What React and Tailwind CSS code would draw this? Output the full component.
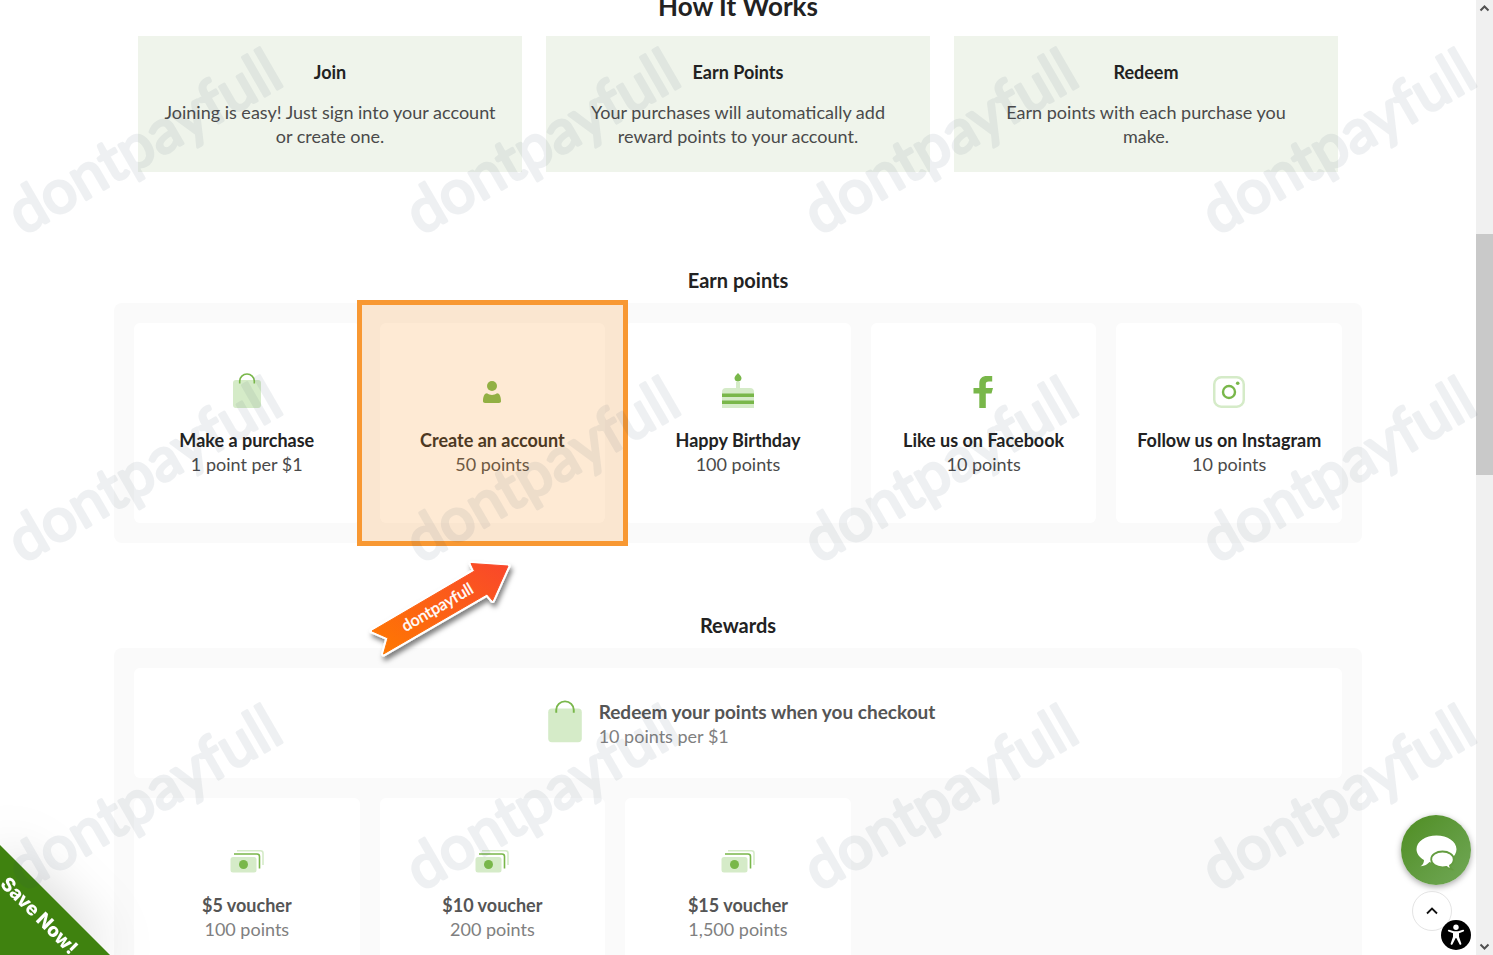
import React from 'react';

const steps = [
  { title: 'Join', text: 'Joining is easy! Just sign into your account or create one.' },
  { title: 'Earn Points', text: 'Your purchases will automatically add reward points to your account.' },
  { title: 'Redeem', text: 'Earn points with each purchase you\nmake.' },
];

const Bag = ({ size }) => (
  <svg width={size} height={size} viewBox="0 0 40 40" fill="none">
    <rect x="6" y="8" width="28" height="28" rx="3" fill="#d5ebc8" />
    <path d="M12.7 11.5V9a7.3 7 0 0 1 14.6 0v2.5" stroke="#79b74a" strokeWidth="1.6" />
  </svg>
);

const User = () => (
  <svg width="40" height="40" viewBox="0 0 40 40" fill="#79b74a">
    <circle cx="20" cy="14" r="5" />
    <path d="M15 21.3c3 2.2 7 2.2 10 0 2.6 0 4 3.400 4 8 0 1.100-.9 1.700-2 1.700H13c-1.100 0-2-.6-2-1.700 0-4.600 1.400-8 4-8z" />
  </svg>
);

const Cake = () => (
  <svg width="40" height="40" viewBox="0 0 40 40">
    <path d="M4 36V20a4 4 0 0 1 4-4h10v-6h4v6h10a4 4 0 0 1 4 4v16z" fill="#d5ebc8" />
    <path d="M4 21.500h32v3.500H4zM4 28.500h32v3.500H4z" fill="#79b74a" />
    <path d="M20 1c2 2.200 3.500 3.600 3.500 5.200 0 2-1.600 3.300-3.500 3.300s-3.500-1.300-3.500-3.300C16.500 4.600 18 3.200 20 1z" fill="#79b74a" />
  </svg>
);

const Facebook = () => (
  <svg width="40" height="40" viewBox="0 0 40 40" fill="#79b74a">
    <path d="M15.300 36V21.500H9.500v-5.500h5.800v-4.500C15.300 6.500 18 4 23 4h5.200v5.500H24.800c-2.300 0-3 .9-3 2.700V16h7.200L27.500 21.500h-5.700V36z" />
  </svg>
);

const Instagram = () => (
  <svg width="40" height="40" viewBox="0 0 40 40" fill="none">
    <rect x="5.250" y="5.250" width="29.500" height="29.500" rx="7" stroke="#d5ebc8" strokeWidth="2.500" />
    <circle cx="20" cy="20" r="6" stroke="#79b74a" strokeWidth="2.400" />
    <circle cx="28.700" cy="11.300" r="1.800" fill="#79b74a" />
  </svg>
);

const Cash = () => (
  <svg width="40" height="40" viewBox="0 0 40 40" fill="none">
    <path d="M10 9.700h23.500a2.500 2.500 0 0 1 2.500 2.500V24" stroke="#d5ebc8" strokeWidth="1.600" />
    <path d="M7 13h23a2.500 2.500 0 0 1 2.500 2.500V27.500" stroke="#79b74a" strokeWidth="1.600" />
    <rect x="3.500" y="16" width="26" height="15.500" rx="2.500" fill="#d5ebc8" />
    <circle cx="16.500" cy="23.500" r="4.500" fill="#79b74a" />
  </svg>
);

const earn = [
  { icon: <Bag size={40} />, title: 'Make a purchase', points: '1 point per $1' },
  { icon: <User />, title: 'Create an account', points: '50 points', highlight: true },
  { icon: <Cake />, title: 'Happy Birthday', points: '100 points' },
  { icon: <Facebook />, title: 'Like us on Facebook', points: '10 points' },
  { icon: <Instagram />, title: 'Follow us on Instagram', points: '10 points' },
];

const vouchers = [
  { title: '$5 voucher', points: '100 points' },
  { title: '$10 voucher', points: '200 points' },
  { title: '$15 voucher', points: '1,500 points' },
];

const Arrow = () => (
  <svg className="absolute -left-5 top-[227px] z-20" width="170" height="120" viewBox="0 0 170 120">
    <defs>
      <linearGradient id="arrowFill" x1="0" y1="1" x2="1" y2="0">
        <stop offset="0" stopColor="#ff7a00" />
        <stop offset="1" stopColor="#f9472b" />
      </linearGradient>
      <filter id="arrowShadow" x="-20%" y="-20%" width="140%" height="140%">
        <feDropShadow dx="2" dy="4" stdDeviation="2.500" floodOpacity="0.5" />
      </filter>
    </defs>
    <path
      d="M111 13.500l37 2.500-15.500 34.500-5.500-6.500-103.500 60 4.500-16L12 81l102.500-60z"
      fill="#fff"
      stroke="#fff"
      strokeWidth="5"
      strokeLinejoin="round"
      filter="url(#arrowShadow)"
    />
    <path
      d="M111 13.500l37 2.500-15.500 34.500-5.500-6.500-103.500 60 4.500-16L12 81l102.500-60z"
      fill="url(#arrowFill)"
      stroke="url(#arrowFill)"
      strokeWidth="1"
      strokeLinejoin="round"
    />
    <text
      transform="translate(80 62) rotate(-30)"
      textAnchor="middle"
      fill="#fff"
      stroke="#fff"
      strokeWidth="0.400"
      strokeLinejoin="round"
      className="font-[Lato,sans-serif] text-[16px]"
    >
      dontpayfull
    </text>
  </svg>
);

const marks = [0, 328, 656].flatMap((y) => [0, 398, 796, 1194].map((x) => ({ x, y })));

const Watermarks = () => (
  <svg className="pointer-events-none absolute inset-0 z-40 h-full w-full opacity-[0.075]" aria-hidden="true">
    {marks.map(({ x, y }) => (
      <text
        key={`${x}-${y}`}
        transform={`translate(${x + 23} ${y + 236}) rotate(-30)`}
        fill="#304860"
        stroke="#304860"
        strokeWidth="3"
        strokeLinejoin="round"
        className="font-[Lato,sans-serif] text-[61px]"
      >
        dontpayfull
      </text>
    ))}
  </svg>
);

const Scrollbar = () => (
  <div className="flex w-[17px] shrink-0 flex-col bg-[#f0f0f0]">
    <svg width="17" height="17" viewBox="0 0 17 17" fill="none" stroke="#505050" strokeWidth="2">
      <path d="M4.500 10.500l4-4 4 4" />
    </svg>
    <div className="flex-1">
      <div className="mt-[217px] h-[241px] bg-[#c9c9c9]"></div>
    </div>
    <svg width="17" height="17" viewBox="0 0 17 17" fill="none" stroke="#505050" strokeWidth="2">
      <path d="M4.500 6.500l4 4 4-4" />
    </svg>
  </div>
);

const App = () => {
  return (
    <div className="relative flex h-screen overflow-hidden bg-white font-[Lato,sans-serif] text-[18px] leading-6 text-[#222]">
      <main className="min-w-0 flex-1">
        <div className="mx-auto max-w-[1248px] text-center">

          {/* HOW IT WORKS */}
          <section className="px-6">
            <h1 className="-mt-[10px] mb-[14px] text-[26px] font-bold leading-8">How It Works</h1>
            <div className="grid grid-cols-3 gap-6">
              {steps.map((s) => (
                <div key={s.title} className="bg-[#eff4eb] p-6">
                  <h3 className="mb-4 font-bold">{s.title}</h3>
                  <p className="whitespace-pre-line text-[#4a4a4a]">{s.text}</p>
                </div>
              ))}
            </div>
          </section>

          {/* EARN */}
          <section className="mt-[95px]">
            <h2 className="mb-[10px] text-[20px] font-bold leading-[26px]">Earn points</h2>
            <div className="grid grid-cols-5 gap-5 rounded-lg bg-[#fafafa] p-5">
              {earn.map((e) => (
                <div key={e.title} className="relative h-[200px] rounded-md bg-white pt-[49px]">
                  <div className="mb-4 flex h-10 justify-center">{e.icon}</div>
                  <h3 className="font-bold">{e.title}</h3>
                  <p className="text-[#4a4a4a]">{e.points}</p>
                  {e.highlight && (
                    <>
                      <div className="absolute -inset-[23px] z-10 border-[5px] border-[#f89832] bg-[#f89428]/20"></div>
                      <Arrow />
                    </>
                  )}
                </div>
              ))}
            </div>
          </section>

          {/* REWARDS */}
          <section className="mt-[69px]">
            <h2 className="mb-[10px] text-[20px] font-bold leading-[26px]">Rewards</h2>
            <div className="rounded-lg bg-[#fafafa] p-5">
              <div className="mb-5 flex h-[110px] items-center justify-center gap-[10px] rounded-md bg-white">
                <Bag size={48} />
                <div className="pt-0.5 text-left leading-[25px]">
                  <h3 className="text-[19px] font-bold text-[#555]">Redeem your points when you checkout</h3>
                  <p className="text-[#808080]">10 points per $1</p>
                </div>
              </div>
              <div className="grid grid-cols-5 gap-5">
                {vouchers.map((v) => (
                  <div key={v.title} className="h-[200px] rounded-md bg-white pt-[43px]">
                    <div className="mb-3 flex h-10 justify-center"><Cash /></div>
                    <h3 className="font-bold text-[#555]">{v.title}</h3>
                    <p className="text-[#808080]">{v.points}</p>
                  </div>
                ))}
              </div>
            </div>
          </section>
        </div>
      </main>

      <Scrollbar />

      {/* corner ribbon */}
      <button className="absolute bottom-0 left-0 z-30 h-[110px] w-[110px] drop-shadow-[0_0_28px_rgba(0,0,0,0.18)]">
        <span className="flex h-full w-full items-center justify-center bg-[#3f820f] [clip-path:polygon(0_0,100%_100%,0_100%)]">
          <span className="mr-[32px] mt-[32px] rotate-45 whitespace-nowrap font-[Inter,sans-serif] text-[19px] font-extrabold text-white">
            Save Now!
          </span>
        </span>
      </button>

      {/* floating buttons */}
      <button
        aria-label="Chat"
        className="absolute bottom-[70px] right-[22px] z-30 h-[70px] w-[70px] rounded-full bg-linear-to-br from-[#4f8d20] to-[#71a856] shadow-[0_2px_6px_rgba(0,0,0,0.35)]"
      >
        <svg width="70" height="70" viewBox="0 0 70 70">
          <path d="M35.500 20.500c11 0 20 6 20 13.700S46.500 48 35.500 48c-2.500 0-5-.3-7-.9-2 2.300-5 4.300-9 4.200 2.200-1.600 3.500-3.500 3.500-6.400-4.700-2.600-7.500-6.400-7.500-10.700 0-7.700 9-13.700 20-13.700z" fill="#fff" />
          <path
            d="M41.500 36.500c6.300 0 11.200 3.500 11.200 7.900 0 2.700-1.600 4.800-3.700 6.200.1 1.500.8 2.700 1.900 3.700-2.400-.1-4.400-1.100-5.500-2.400-1.300.3-2.500.4-3.900.4-6.300 0-11.300-3.500-11.300-7.900s5-7.900 11.300-7.900z"
            fill="#fff"
            stroke="#639c3f"
            strokeWidth="1.800"
          />
        </svg>
      </button>
      <button
        aria-label="Back to top"
        className="absolute bottom-6 right-[41px] z-30 flex h-10 w-10 items-center justify-center rounded-full border border-[#e4e4e4] bg-white"
      >
        <svg width="12" height="8" viewBox="0 0 12 8" fill="none" stroke="#111" strokeWidth="1.800">
          <path d="M1 6.500l5-5 5 5" />
        </svg>
      </button>
      <button aria-label="Accessibility" className="absolute bottom-[5px] right-[22px] z-30 h-[30px] w-[30px] rounded-full bg-black">
        <svg width="30" height="30" viewBox="0 0 30 30" fill="#fff">
          <circle cx="15" cy="7.300" r="2.700" />
          <path d="M8 9.700l5 1.600h4l5-1.600c1.200-.3 1.600 1.300.5 1.700L18 13.200v3.600l2.300 6.700c.4 1.300-1.300 1.900-1.800.7L15.300 18h-.6l-3.200 6.200c-.6 1.200-2.200.6-1.800-.7l2.300-6.700v-3.600l-4.500-1.800C6.400 11 6.800 9.400 8 9.700z" />
        </svg>
      </button>

      <Watermarks />
    </div>
  );
};

export default App;
